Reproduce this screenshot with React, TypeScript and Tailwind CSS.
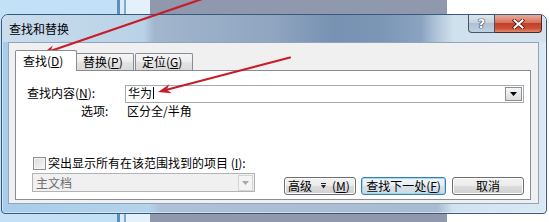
import React from "react";

type P = [number, number];

function Arrow({ from, tip }: { from: P; tip: P }) {
  const dx = tip[0] - from[0];
  const dy = tip[1] - from[1];
  const L = Math.hypot(dx, dy);
  const ux = dx / L;
  const uy = dy / L;
  const px = -uy;
  const py = ux;
  const len = 13;
  const half = 4.6;
  const notch = 4;
  const bx = tip[0] - ux * len;
  const by = tip[1] - uy * len;
  const nx = tip[0] - ux * (len - notch);
  const ny = tip[1] - uy * (len - notch);
  const pts = [
    [tip[0], tip[1]],
    [bx + px * half, by + py * half],
    [nx, ny],
    [bx - px * half, by - py * half],
  ]
    .map((p) => p.map((v) => v.toFixed(2)).join(","))
    .join(" ");
  return (
    <g>
      <line x1={from[0]} y1={from[1]} x2={nx} y2={ny} stroke="#c81d28" strokeWidth={2.2} strokeLinecap="round" />
      <polygon points={pts} fill="#c81d28" />
    </g>
  );
}

function U({ children }: { children: React.ReactNode }) {
  return <span className="underline decoration-1 underline-offset-[1px]">{children}</span>;
}

function DownTri({ color }: { color: string }) {
  return (
    <svg width="7" height="4" viewBox="0 0 7 4">
      <polygon points="0,0 7,0 3.5,4" fill={color} />
    </svg>
  );
}

export default function App() {
  return (
    <div className="relative w-[549px] h-[222px] overflow-hidden bg-white text-[12px] leading-[14px] text-black font-['Noto_Sans_CJK_SC','Microsoft_YaHei',sans-serif]">
      {/* desktop behind the dialog */}
      <div className="absolute inset-0 flex">
        <div className="w-[117px] bg-[#c2e1f6]" />
        <div className="w-[3px] bg-[#5a8fbf]" />
        <div className="w-[4px] bg-[#d8ecf9]" />
        <div className="w-[2px] bg-[#7ea9cf]" />
        <div className="w-[24px] bg-[#e4f1fb]" />
        <div className="w-[297px] bg-[#8f98ac]" />
        <div className="flex-1 bg-white" />
      </div>

      {/* dialog window */}
      <div className="absolute left-[1px] top-[14px] w-[546px] h-[200px] flex flex-col rounded-t-[7px] rounded-b-[4px] border border-[#3a5a7d] bg-[linear-gradient(to_right,#a7cdea_0%,#b4d3ec_27%,#aec1d6_29%,#a8bbd0_80%,#d2e3f0_83%,#d9e8f3_100%)] shadow-[inset_0_0_0_1px_rgba(255,255,255,0.45)]">
        {/* title bar */}
        <div className="relative h-[27px] shrink-0 flex items-center pl-[7px] rounded-t-[6px] bg-[linear-gradient(to_right,#c9dded_0%,#bad2e7_26%,#a2b6cd_28%,#8fa5c0_50%,#7791b2_61%,#7c96b6_70%,#8aa3c0_77%,#b1c6da_80%,#d0e0ec_83%,#d4e2ee_100%)]">
          <span>查找和替换</span>
          <div className="absolute right-[4px] top-0 flex h-[18px]">
            <div className="w-[27px] h-[18px] flex items-center justify-center border border-t-0 border-[#46546a] rounded-bl-[4px] bg-[linear-gradient(to_bottom,#dde6ee_0%,#c6d3df_45%,#afc0d2_50%,#c0d1e1_100%)]">
              <span className="text-[13px] leading-[14px] font-bold text-white font-['DejaVu_Sans',sans-serif] [text-shadow:0_0_1px_#1d2938,0_0_1px_#1d2938,0_0_1px_#1d2938]">
                ?
              </span>
            </div>
            <div className="w-[47px] h-[18px] flex items-center justify-center border border-t-0 border-l-0 border-[#4a2a25] rounded-br-[4px] bg-[linear-gradient(to_bottom,#e9aa9b_0%,#d8725e_45%,#c23f26_50%,#cc5236_80%,#e38b6f_100%)]">
              <svg width="13" height="10" viewBox="0 0 13 10">
                <path d="M2.5 1.5 L10.5 8.5 M10.5 1.5 L2.5 8.5" stroke="#4a1a14" strokeWidth="3.6" strokeLinecap="square" />
                <path d="M2.5 1.5 L10.5 8.5 M10.5 1.5 L2.5 8.5" stroke="#ffffff" strokeWidth="2" strokeLinecap="square" />
              </svg>
            </div>
          </div>
        </div>

        {/* client area */}
        <div className="ml-[6px] w-[531px] h-[162px] border border-[#8ea5bd] bg-[#f0f0f0] flex flex-col">
          {/* tabs */}
          <div className="flex items-end pl-[6px] pt-[7px]">
            <div className="relative z-10 -mb-[1px] w-[62px] h-[21px] pl-[7px] pt-[3px] bg-white border border-b-0 border-[#898c95] rounded-t-[2px]">
              查找(<U>D</U>)
            </div>
            <div className="w-[57px] h-[17px] pl-[6px] pt-[1px] border border-l-0 border-b-0 border-[#898c95] rounded-tr-[2px] bg-[linear-gradient(to_bottom,#f6f6f6_0%,#ededed_50%,#e3e3e3_50%,#dadada_100%)]">
              替换(<U>P</U>)
            </div>
            <div className="ml-[1px] w-[58px] h-[17px] pl-[6px] pt-[1px] border border-b-0 border-[#898c95] rounded-t-[2px] bg-[linear-gradient(to_bottom,#f6f6f6_0%,#ededed_50%,#e3e3e3_50%,#dadada_100%)]">
              定位(<U>G</U>)
            </div>
          </div>

          {/* tab page */}
          <div className="ml-[6px] w-[516px] h-[130px] border border-[#898c95] bg-white flex flex-col">
            <div className="mt-[14px] pl-[11px] flex items-center h-[18px]">
              <div className="w-[98px] mb-[2px]">
                查找内容(<U>N</U>):
              </div>
              <div className="w-[399px] h-[18px] border border-[#a5abb3] bg-white flex items-center pr-[1px]">
                <div className="flex-1 flex items-center pl-[2px] mb-[2px]">
                  <span>华为</span>
                  <span className="ml-[1px] w-[1px] h-[12px] bg-black" />
                </div>
                <div className="w-[17px] h-[14px] flex items-center justify-center border border-[#8e8f8f] bg-[linear-gradient(to_bottom,#f7f7f7_0%,#e9e9e9_50%,#dcdcdc_100%)]">
                  <DownTri color="#000000" />
                </div>
              </div>
            </div>

            <div className="pl-[11px] flex h-[15px] leading-[15px]">
              <div className="w-[98px] pl-[54px]">选项:</div>
              <div className="pl-[2px]">区分全/半角</div>
            </div>

            <div className="mt-auto flex items-end justify-between pb-[4px] pr-[6px] pl-[16px]">
              <div className="flex flex-col mb-[3px]">
                <div className="flex items-center h-[13px]">
                  <div className="ml-[1px] w-[13px] h-[13px] border border-[#8f8f8f] bg-[linear-gradient(135deg,#d8d8d8_0%,#f8f8f8_100%)] shadow-[inset_0_0_0_1px_#f4f4f4]" />
                  <span className="ml-[2px] mb-[2px]">
                    突出显示所有在该范围找到的项目 (<U>I</U>):
                  </span>
                </div>
                <div className="mt-[3px] w-[223px] h-[19px] border border-[#b0b4b8] bg-[#f0f0f0] flex items-center pl-[3px] pr-[1px]">
                  <span className="flex-1 text-[#6d6d6d]">主文档</span>
                  <div className="w-[15px] h-[16px] flex items-center justify-center border border-[#d4d4d4] bg-[#f4f4f4]">
                    <DownTri color="#a8a8a8" />
                  </div>
                </div>
              </div>

              <div className="flex items-center">
                <div className="w-[72px] h-[18px] flex items-center pl-[3px] border border-[#707070] rounded-[3px] bg-[linear-gradient(to_bottom,#f2f2f2_0%,#ebebeb_50%,#dddddd_50%,#cfcfcf_100%)] shadow-[inset_0_0_0_1px_#fbfbfb]">
                  <span>高级</span>
                  <svg className="ml-[9px]" width="5" height="6" viewBox="0 0 5 6">
                    <rect x="0" y="0" width="5" height="1" fill="#222" />
                    <polygon points="0,2 5,2 2.5,5.5" fill="#222" />
                  </svg>
                  <span className="ml-[6px]">
                    (<U>M</U>)
                  </span>
                </div>
                <div className="ml-[5px] w-[85px] h-[18px] flex items-center justify-center border border-[#3c7fb1] rounded-[3px] bg-[linear-gradient(to_bottom,#f1f6fa_0%,#e7eef4_50%,#d8e2ea_50%,#ccd8e2_100%)] shadow-[inset_0_0_0_1px_#9fdaf5]">
                  查找下一处(<U>F</U>)
                </div>
                <div className="ml-[6px] w-[72px] h-[18px] flex items-center justify-center border border-[#707070] rounded-[3px] bg-[linear-gradient(to_bottom,#f2f2f2_0%,#ebebeb_50%,#dddddd_50%,#cfcfcf_100%)] shadow-[inset_0_0_0_1px_#fbfbfb]">
                  取消
                </div>
              </div>
            </div>
          </div>
        </div>
      </div>

      {/* red annotation arrows */}
      <svg className="absolute inset-0 pointer-events-none" width="549" height="222" viewBox="0 0 549 222">
        <Arrow from={[205, -2]} tip={[42, 54]} />
        <Arrow from={[290, 57.5]} tip={[158, 92]} />
      </svg>
    </div>
  );
}
